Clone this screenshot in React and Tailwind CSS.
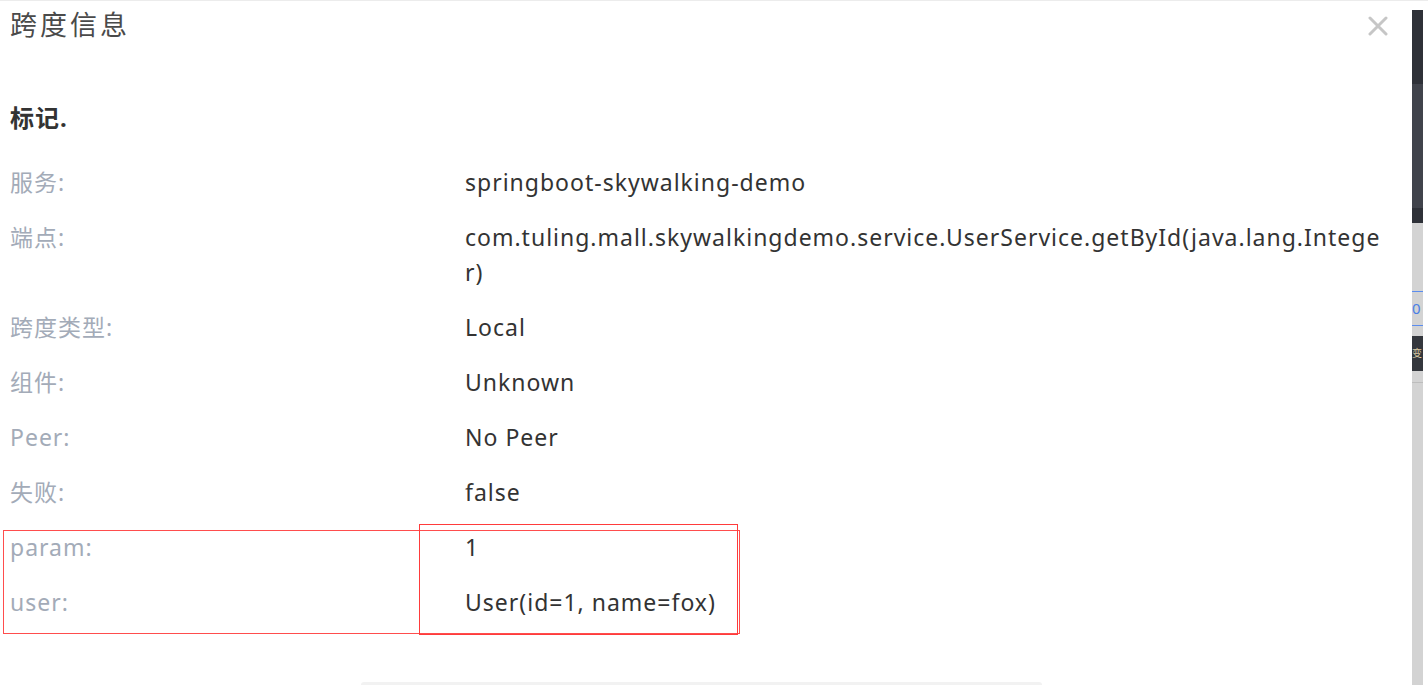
import React from 'react'

const rows = [
  { label: '服务:', value: 'springboot-skywalking-demo' },
  { label: '端点:', value: 'com.tuling.mall.skywalkingdemo.service.UserService.getById(java.lang.Integer)' },
  { label: '跨度类型:', value: 'Local' },
  { label: '组件:', value: 'Unknown' },
  { label: 'Peer:', value: 'No Peer' },
  { label: '失败:', value: 'false' },
  { label: 'param:', value: '1' },
  { label: 'user:', value: 'User(id=1, name=fox)' },
]

const font = { fontFamily: '"Noto Sans", "Noto Sans CJK SC", sans-serif' }

const SideStrip = () => (
  <div className="w-[11px] flex flex-col pt-[9px] overflow-hidden">
    <div className="h-[74px] bg-[#2e3138]" />
    <div className="h-[124px] bg-[#40434b]" />
    <div className="h-[15px] bg-[#2e3138]" />
    <div className="flex-1 bg-[#d3d3d3] flex flex-col">
      <div className="h-[68px]" />
      <div className="h-[35px] border-y border-[#5b8def] text-[#4a7fe6] text-[15px] leading-[33px]">0</div>
      <div className="h-[10px]" />
      <div className="h-[35px] bg-[#34373d] text-[#d9c9a3] text-[10px] leading-[35px]">变</div>
      <div className="h-[11px]" />
      <div className="h-px bg-[#bdbdbd]" />
    </div>
  </div>
)

export default function App() {
  return (
    <div className="w-[1428px] h-[685px] bg-white flex overflow-hidden border-t border-[#ececec]" style={font}>
      <div className="relative flex-1 flex flex-col pl-[10px]">
        <div className="flex justify-between items-start pt-[6px] pr-[24px]">
          <h1 className="text-[27px] leading-[35px] text-[#4a4a4a] tracking-[3px]">跨度信息</h1>
          <svg width="20" height="20" viewBox="0 0 20 20" className="mt-[9px]">
            <path d="M2 2 L18 18 M18 2 L2 18" stroke="#c6c6c6" strokeWidth="3" strokeLinecap="round" />
          </svg>
        </div>

        <h2 className="mt-[58px] text-[24px] leading-[35px] font-bold text-[#333] tracking-[1px]">标记.</h2>

        <div className="mt-[30px] flex flex-col gap-[20px]">
          {rows.map((r) => (
            <div key={r.label} className="flex text-[23px] leading-[35px] tracking-[1px]">
              <div className="w-[455px] shrink-0 text-[#a3abb8]">{r.label}</div>
              <div className="w-[917px] text-[#333] break-all">{r.value}</div>
            </div>
          ))}
        </div>

        <div className="mt-auto ml-[351px] w-[681px] h-[3px] bg-[#f2f2f2] rounded-t" />

        {/* annotation boxes drawn over the screenshot */}
        <div className="absolute left-[3px] top-[529px] w-[737px] h-[104px] border-[1.5px] border-[#ff4d4d] pointer-events-none" />
        <div className="absolute left-[419px] top-[523px] w-[319px] h-[111px] border-[1.5px] border-[#ff3b3b] pointer-events-none" />
      </div>
      <SideStrip />
      <div className="w-[5px]" />
    </div>
  )
}
